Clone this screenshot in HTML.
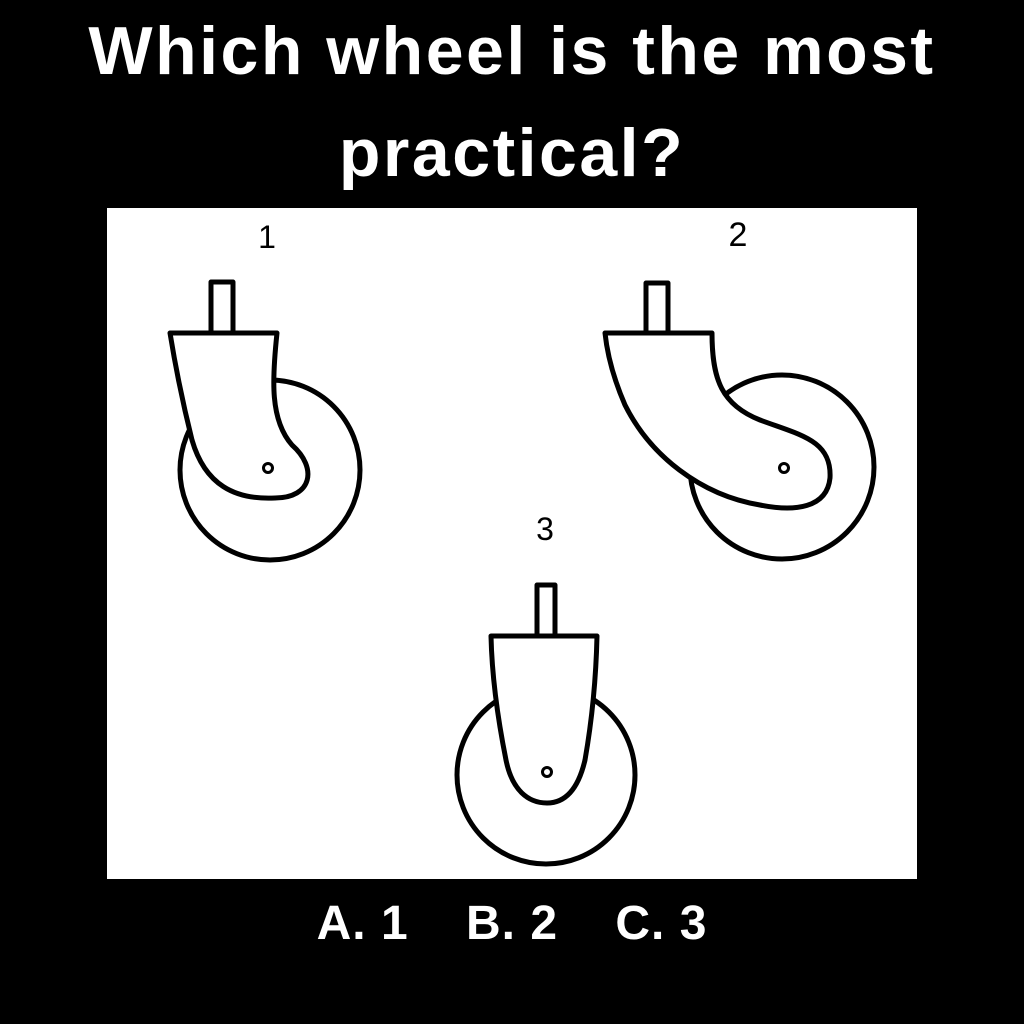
<!DOCTYPE html>
<html><head><style>
body{margin:0;background:#000;width:1024px;height:1024px;overflow:hidden;font-family:"Liberation Sans",sans-serif;color:#fff}
.t{position:absolute;left:0;width:1024px;text-align:center;font-weight:bold;font-size:68px;letter-spacing:2.5px}
</style></head><body>
<div class="t" style="top:12px">Which wheel is the most</div>
<div class="t" style="top:114px">practical?</div>
<svg style="position:absolute;left:0;top:0" width="1024" height="1024">
<rect x="107" y="208" width="810" height="671" fill="#fff"/>
<g fill="none" stroke="#000" stroke-width="5" stroke-linejoin="round">
<text x="267" y="248" font-size="32" fill="#000" stroke="none" text-anchor="middle" font-family="Liberation Sans">1</text>
<text x="738" y="246" font-size="34" fill="#000" stroke="none" text-anchor="middle" font-family="Liberation Sans">2</text>
<text x="545" y="540" font-size="32" fill="#000" stroke="none" text-anchor="middle" font-family="Liberation Sans">3</text>
<circle cx="270" cy="470" r="90"/>
<path d="M170 333 L277 333 C272 380 270 420 292 445 C318 468 312 498 275 498 C235 500 205 485 192 440 C182 400 176 370 170 333 Z" fill="#fff"/>
<rect x="211" y="282" width="22" height="51" fill="#fff"/>
<circle cx="268" cy="468" r="4.5" stroke-width="3"/>
<circle cx="782" cy="467" r="92"/>
<path d="M605 333 L712 333 C712 380 722 405 760 420 C800 435 832 440 830 478 C827 508 795 512 760 505 C700 495 650 455 625 405 C612 375 607 352 605 333 Z" fill="#fff"/>
<rect x="646" y="283" width="22" height="50" fill="#fff"/>
<circle cx="784" cy="468" r="4.5" stroke-width="3"/>
<circle cx="546" cy="775" r="89"/>
<path d="M491 636 L597 636 C596 680 592 720 585 760 C578 790 565 803 547 803 C528 803 512 790 506 760 C498 720 492 680 491 636 Z" fill="#fff"/>
<rect x="537" y="585" width="18" height="51" fill="#fff"/>
<circle cx="547" cy="772" r="4.5" stroke-width="3"/>
</g>
</svg>
<div style="position:absolute;top:896px;left:0;width:1024px;text-align:center;font-weight:bold;font-size:48px;letter-spacing:1px;white-space:pre">A. 1    B. 2    C. 3</div>
</body></html>
